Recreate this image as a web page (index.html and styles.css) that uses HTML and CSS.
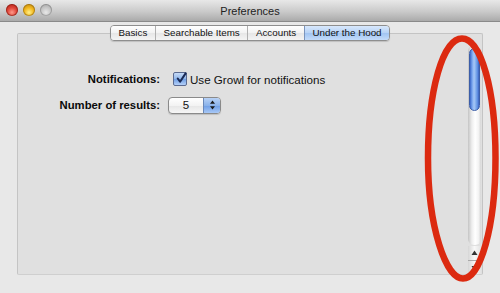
FILE: index.html
```html
<!DOCTYPE html>
<html>
<head>
<meta charset="utf-8">
<link rel="stylesheet" href="styles.css">
</head>
<body>
<div class="window">
  <div class="titlebar">
    <div class="lights">
      <span class="light red"></span>
      <span class="light yellow"></span>
      <span class="light grey"></span>
    </div>
    <div class="title">Preferences</div>
  </div>
  <div class="content">
    <div class="tabs">
      <div class="tab">Basics</div>
      <div class="tab">Searchable Items</div>
      <div class="tab">Accounts</div>
      <div class="tab active">Under the Hood</div>
    </div>
    <div class="panel">
      <div class="form">
        <div class="label">Notifications:</div>
        <div class="control check-row">
          <span class="checkbox">
            <svg width="13" height="13" viewBox="0 0 13 13"><path d="M3 6.5 L5.5 10 L11.5 1" fill="none" stroke="#1a2a55" stroke-width="2.2" stroke-linecap="round" stroke-linejoin="round"/></svg>
          </span>
          <span class="check-text">Use Growl for notifications</span>
        </div>
        <div class="label">Number of results:</div>
        <div class="control">
          <div class="popup">
            <span class="popup-value">5</span>
            <span class="popup-arrows">
              <svg width="7" height="10" viewBox="0 0 7 10"><path d="M3.5 0.5 L6 3.8 L1 3.8 Z M3.5 9.5 L6 6.2 L1 6.2 Z" fill="#1a1a1a"/></svg>
            </span>
          </div>
        </div>
      </div>
      <div class="scrollbar">
        <div class="track">
          <div class="thumb"></div>
        </div>
        <div class="arrow up"><svg width="7" height="6" viewBox="0 0 7 6"><path d="M3.5 0.5 L6.5 5 L0.5 5 Z" fill="#333"/></svg></div>
        <div class="arrow down"><svg width="7" height="6" viewBox="0 0 7 6"><path d="M3.5 5.5 L6.5 1 L0.5 1 Z" fill="#333"/></svg></div>
      </div>
    </div>
  </div>
  <svg class="annot" width="500" height="293" viewBox="0 0 500 293">
    <path d="M462 38.5 C481 38.5 495.5 90 495.5 158 C495.5 228 480 278.5 463 278.5 C446 278.5 428 228 428 158 C428 90 443 38.5 462 38.5 Z" fill="none" stroke="#dc2a10" stroke-width="6.5"/>
  </svg>
</div>
</body>
</html>
```

FILE: styles.css
```css
* { box-sizing: border-box; }
html, body { margin: 0; padding: 0; }
body {
  width: 500px;
  height: 293px;
  overflow: hidden;
  font-family: "Liberation Sans", Arial, sans-serif;
  background: #e8e8e8;
}
.window {
  position: relative;
  width: 500px;
  height: 293px;
  background: #e8e8e8;
}
.titlebar {
  position: relative;
  height: 22px;
  background: linear-gradient(#e8e8e8, #cacaca 55%, #aaaaaa);
  border-bottom: 1px solid #8a8a8a;
  display: flex;
  align-items: center;
  justify-content: center;
}
.lights {
  position: absolute;
  left: 6px;
  top: 4px;
  display: flex;
  gap: 5px;
}
.light {
  width: 12px;
  height: 12px;
  border-radius: 50%;
  display: block;
}
.light.red {
  background: radial-gradient(circle at 50% 70%, #ff9a8a 0%, #e0463a 45%, #a8160e 100%);
  box-shadow: inset 0 0 0 1px rgba(110,20,10,0.5);
}
.light.yellow {
  background: radial-gradient(circle at 50% 70%, #fff08a 0%, #f2b820 45%, #b07a08 100%);
  box-shadow: inset 0 0 0 1px rgba(130,90,10,0.5);
}
.light.grey {
  background: radial-gradient(circle at 50% 70%, #e8e8e8 0%, #c4c4c4 50%, #9a9a9a 100%);
  box-shadow: inset 0 0 0 1px rgba(100,100,100,0.4);
}
.title {
  font-size: 11px;
  color: #222;
}
.content {
  padding: 3px 17px 0 17px;
  display: flex;
  flex-direction: column;
}
.tabs {
  position: relative;
  z-index: 2;
  align-self: center;
  display: flex;
  height: 16px;
  border: 1px solid #8e8e8e;
  border-radius: 4px;
  overflow: hidden;
  box-shadow: 0 1px 1px rgba(0,0,0,0.15);
}
.tab {
  font-size: 9.8px;
  color: #111;
  padding: 0 7.6px;
  line-height: 14px;
  background: linear-gradient(#ffffff, #f2f2f2 50%, #e6e6e6 51%, #f4f4f4);
  border-left: 1px solid #b0b0b0;
}
.tab:first-child { border-left: none; }
.tab.active {
  background: linear-gradient(#d8e8fc, #b6d2f6 50%, #a0c4f2 51%, #c4dcfa);
  border-left: 1px solid #7a94bc;
}
.panel {
  margin-top: -8px;
  height: 242px;
  background: #e0e0e0;
  border: 1px solid #c4c4c4;
  border-bottom-color: #cfcfcf;
  border-radius: 2px;
  display: flex;
}
.form {
  flex: 1;
  padding-top: 36px;
  display: grid;
  grid-template-columns: 142px auto;
  grid-auto-rows: 18px;
  row-gap: 8px;
  align-items: center;
  align-content: start;
}
.label {
  text-align: right;
  font-size: 11.3px;
  font-weight: bold;
  color: #0a0a0a;
}
.control {
  display: flex;
  align-items: center;
}
.check-row { padding-left: 13px; }
.checkbox {
  width: 14px;
  height: 14px;
  border: 1px solid #5a6a90;
  border-radius: 2px;
  background: linear-gradient(#c6daf6, #8fb6ea 50%, #6e9ee4 51%, #b4d0f8);
  display: flex;
  align-items: center;
  justify-content: center;
  position: relative;
}
.checkbox svg { position: relative; top: -1px; left: 1px; }
.check-text {
  font-size: 11.6px;
  color: #111;
  margin-left: 3px;
}
.popup {
  margin-left: 8px;
  width: 53px;
  height: 17px;
  border: 1px solid #8a8a8a;
  border-radius: 4px;
  display: flex;
  overflow: hidden;
  background: linear-gradient(#ffffff, #f3f3f3 50%, #e6e6e6 51%, #f6f6f6);
  box-shadow: 0 1px 1px rgba(0,0,0,0.15);
}
.popup-value {
  flex: 1;
  font-size: 11.5px;
  line-height: 15px;
  text-align: center;
  color: #111;
}
.popup-arrows {
  width: 17px;
  display: flex;
  align-items: center;
  justify-content: center;
  background: linear-gradient(#b8d2f6, #8ab2ea 50%, #6e9ee6 51%, #a8c8f6);
  border-left: 1px solid #6a88b8;
}
.scrollbar {
  width: 13px;
  margin: 11px 1px 0 0;
  display: flex;
  flex-direction: column;
}
.track {
  flex: 1;
  border-radius: 6px;
  background: linear-gradient(90deg, #c4c4c4, #eeeeee 30%, #ffffff 55%, #f4f4f4 80%, #d6d6d6);
  padding: 3px 1px 0 1px;
  margin-bottom: 1px;
}
.thumb {
  height: 63px;
  border-radius: 6px;
  background: linear-gradient(90deg, #3a66c8, #7aa6ee 25%, #a8c8f6 45%, #8ab4f0 60%, #5a8ae0 85%, #3a5eb8);
  border: 1px solid #3c5ea8;
}
.arrow {
  height: 14px;
  display: flex;
  align-items: center;
  justify-content: center;
  background: linear-gradient(90deg, #d6d6d6, #f8f8f8 50%, #e2e2e2);
}
.arrow.down { border-top: 1px solid #a8a8a8; }
.annot {
  position: absolute;
  left: 0;
  top: 0;
  pointer-events: none;
  z-index: 5;
}
```
